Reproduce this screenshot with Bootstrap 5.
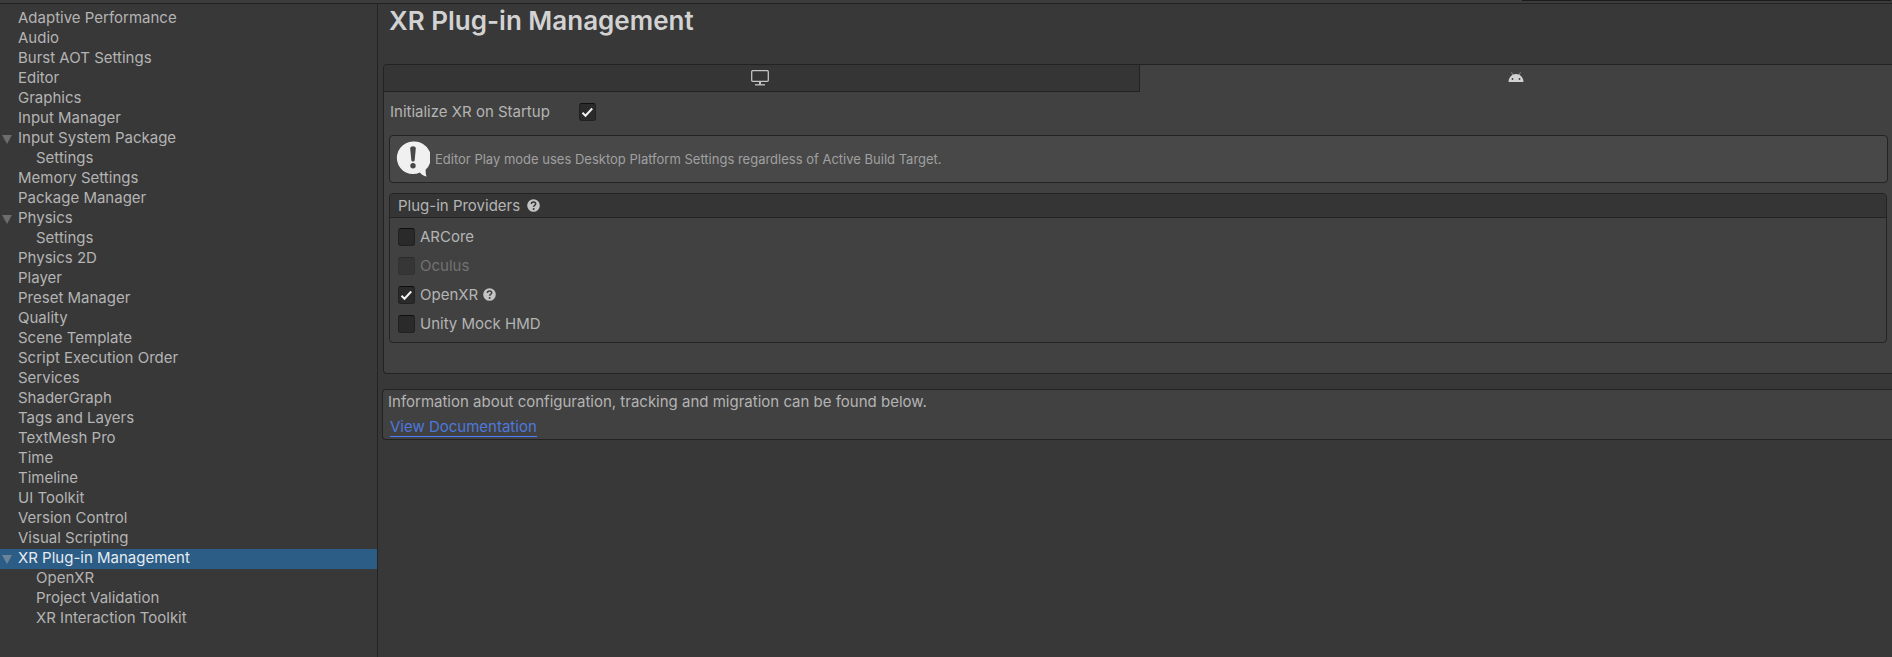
<!DOCTYPE html>
<html lang="en">
<head>
<meta charset="utf-8">
<meta name="viewport" content="width=device-width, initial-scale=1">
<title>Project Settings</title>
<link href="https://cdn.jsdelivr.net/npm/bootstrap@5.3.0/dist/css/bootstrap.min.css" rel="stylesheet">
<style>
  :root { --line: #232323; --panel: #414141; --base: #383838; --ink: #b4b4b4; }
  body { background: var(--base); color: var(--ink); font-family: Inter, "Liberation Sans", sans-serif; font-size: 15px; line-height: 20px; }
  .top-strip { height: 4px; background: #3c3c3c; border-bottom: 1px solid var(--line); }
  .search-edge { width: 369px; height: 1px; margin-right: 1px; background: #1c1c1c; }
  .sidebar { width: 378px; padding-top: 5px; border-right: 1px solid var(--line); }
  .tree-link { display: flex; align-items: center; height: 20px; padding: 0 0 2px 18px; color: var(--ink); text-decoration: none; white-space: nowrap; }
  .tree-link.child { padding-left: 36px; }
  .tree-link.parent { padding-left: 2px; }
  .tree-link.parent svg { width: 10px; height: 10px; margin: 2px 6px 0 0; fill: #6c6c6c; }
  .tree-link.selected { background: #2c5d87; color: #e6ecf1; }
  .tree-link.selected svg { fill: #6b8499; }
  .content-pane { padding-left: 5px; }
  .page-title { font-size: 26px; line-height: 32px; font-weight: 600; color: #d2d2d2; padding-left: 6px; margin: 1px 0 27px; }
  .frame { border: 1px solid var(--line); border-right: 0; border-radius: 4px 0 0 4px; background: var(--panel); }
  .platform-tab { height: 27px; padding: 0 0 4px; border: 0; background: transparent; color: #c4c4c4; }
  .platform-tab.idle { padding: 0 2px 0 0; background: #353535; border-right: 1px solid var(--line); border-bottom: 1px solid var(--line); border-radius: 3px 0 0 0; }
  .platform-tab svg { display: block; margin: 0 auto; }
  .tick { appearance: none; width: 17px; height: 18px; margin: 0; flex: none; background: #2a2a2a center/17px 18px no-repeat; border: 1px solid #212121; border-top-color: #0f0f0f; border-radius: 3px; }
  .tick:checked { background-image: url("data:image/svg+xml,%3Csvg xmlns='http://www.w3.org/2000/svg' viewBox='0 0 17 18'%3E%3Cpath d='M3.5 9.8 6.5 12.7 13.2 5.5' fill='none' stroke='%23f2f2f2' stroke-width='2'/%3E%3C/svg%3E"); }
  .tick:disabled { background-color: #363636; border-color: #323232; border-top-color: #2b2b2b; }
  .startup-row { height: 40px; padding: 0 0 1px 6px; }
  .startup-row label { width: 189px; }
  .notice { height: 48px; margin: 3px 4px 10px 5px; padding-left: 6px; border: 1px solid var(--line); border-radius: 4px; background: #484848; color: #a0a0a0; font-size: 13px; }
  .notice svg { margin-right: 5px; }
  .providers { margin: 0 5px 30px 5px; border: 1px solid var(--line); border-radius: 4px; }
  .providers-head { height: 24px; padding: 0 0 0 8px; gap: 7px; background: #353535; border-bottom: 1px solid var(--line); border-radius: 3px 3px 0 0; }
  .provider-list { padding: 4px 8px; }
  .provider-row { height: 29px; gap: 5px; }
  .provider-row.off { color: #727272; }
  .doc-frame { margin: 15px 0 0 -1px; height: 51px; padding: 2px 5px; }
  .doc-link { color: #4d78df; text-decoration: none; border-bottom: 1px solid #4c7eff; line-height: 19px; margin: 5px 0 0 2px; }
</style>
</head>
<body>
<div class="d-flex flex-column min-vh-100">
  <header class="top-strip d-flex justify-content-end"><div class="search-edge"></div></header>
  <div class="d-flex flex-grow-1">
    <nav class="sidebar flex-shrink-0" aria-label="Settings">
      <a class="tree-link" href="#">Adaptive Performance</a>
      <a class="tree-link" href="#">Audio</a>
      <a class="tree-link" href="#">Burst AOT Settings</a>
      <a class="tree-link" href="#">Editor</a>
      <a class="tree-link" href="#">Graphics</a>
      <a class="tree-link" href="#">Input Manager</a>
      <a class="tree-link parent" href="#"><svg viewBox="0 0 10 10"><path d="M0 1h10L5 10z"/></svg>Input System Package</a>
      <a class="tree-link child" href="#">Settings</a>
      <a class="tree-link" href="#">Memory Settings</a>
      <a class="tree-link" href="#">Package Manager</a>
      <a class="tree-link parent" href="#"><svg viewBox="0 0 10 10"><path d="M0 1h10L5 10z"/></svg>Physics</a>
      <a class="tree-link child" href="#">Settings</a>
      <a class="tree-link" href="#">Physics 2D</a>
      <a class="tree-link" href="#">Player</a>
      <a class="tree-link" href="#">Preset Manager</a>
      <a class="tree-link" href="#">Quality</a>
      <a class="tree-link" href="#">Scene Template</a>
      <a class="tree-link" href="#">Script Execution Order</a>
      <a class="tree-link" href="#">Services</a>
      <a class="tree-link" href="#">ShaderGraph</a>
      <a class="tree-link" href="#">Tags and Layers</a>
      <a class="tree-link" href="#">TextMesh Pro</a>
      <a class="tree-link" href="#">Time</a>
      <a class="tree-link" href="#">Timeline</a>
      <a class="tree-link" href="#">UI Toolkit</a>
      <a class="tree-link" href="#">Version Control</a>
      <a class="tree-link" href="#">Visual Scripting</a>
      <a class="tree-link parent selected" href="#" aria-current="page"><svg viewBox="0 0 10 10"><path d="M0 1h10L5 10z"/></svg>XR Plug-in Management</a>
      <a class="tree-link child" href="#">OpenXR</a>
      <a class="tree-link child" href="#">Project Validation</a>
      <a class="tree-link child" href="#">XR Interaction Toolkit</a>
    </nav>
    <main class="content-pane flex-grow-1">
      <h1 class="page-title">XR Plug-in Management</h1>
      <section class="frame">
        <div class="row g-0">
          <button type="button" class="platform-tab idle col" aria-label="Desktop">
            <svg width="18" height="16" viewBox="0 0 18 16" fill="none" stroke="currentColor"><rect x=".7" y=".7" width="16.6" height="10.6" rx="1" stroke-width="1.3"/><path d="M9 11.5v3" stroke-width="2"/><path d="M4 14.8h10" stroke-width="1.3"/></svg>
          </button>
          <button type="button" class="platform-tab col" aria-label="Android">
            <svg width="16" height="10" viewBox="0 0 16 10"><path d="M3.5.3 5 3M12.5.3 11 3" stroke="#8a8a8a" fill="none"/><path d="M.5 10C.6 5.500 4 2 8 2s7.400 3.500 7.500 8z" fill="#d2d2d2"/><circle cx="4.500" cy="7" r=".9" fill="#414141"/><circle cx="11.500" cy="7" r=".9" fill="#414141"/></svg>
          </button>
        </div>
        <div class="startup-row d-flex align-items-center">
          <label for="startup">Initialize XR on Startup</label>
          <input class="tick" type="checkbox" id="startup" checked>
        </div>
        <div class="notice d-flex align-items-center">
          <svg class="flex-shrink-0" width="34" height="36" viewBox="0 0 34 36"><path d="M17 .5a16.300 16.300 0 1 0 7 31.100c1.500 2 3.500 3.400 6.500 4-.7-2-1-4.500-.8-7A16.300 16.300 0 0 0 17 .5z" fill="#f0f0f0"/><path d="M14.200 7.500c0-3 5.600-3 5.600 0L18.700 19c-.2 2-3.200 2-3.400 0z" fill="#484848"/><circle cx="17" cy="24.800" r="2.700" fill="#484848"/></svg>
          <span>Editor Play mode uses Desktop Platform Settings regardless of Active Build Target.</span>
        </div>
        <fieldset class="providers">
          <div class="providers-head d-flex align-items-center">
            <span>Plug-in Providers</span>
            <svg width="13" height="13" viewBox="0 0 13 13"><circle cx="6.500" cy="6.500" r="6.300" fill="#c4c4c4"/><path d="M4.400 5c0-2.800 4.300-2.600 4.300-.2 0 1.500-2.100 1.500-2.100 3" fill="none" stroke="#353535" stroke-width="1.500"/><circle cx="6.600" cy="9.900" r="1" fill="#353535"/></svg>
          </div>
          <div class="provider-list">
            <div class="provider-row d-flex align-items-center"><input class="tick" type="checkbox" id="arcore"><label for="arcore">ARCore</label></div>
            <div class="provider-row off d-flex align-items-center"><input class="tick" type="checkbox" id="oculus" disabled><label for="oculus">Oculus</label></div>
            <div class="provider-row d-flex align-items-center"><input class="tick" type="checkbox" id="openxr" checked><label for="openxr">OpenXR</label>
              <svg width="13" height="13" viewBox="0 0 13 13"><circle cx="6.500" cy="6.500" r="6.300" fill="#c4c4c4"/><path d="M4.400 5c0-2.800 4.300-2.600 4.300-.2 0 1.500-2.100 1.500-2.100 3" fill="none" stroke="#414141" stroke-width="1.500"/><circle cx="6.600" cy="9.900" r="1" fill="#414141"/></svg>
            </div>
            <div class="provider-row d-flex align-items-center"><input class="tick" type="checkbox" id="mockhmd"><label for="mockhmd">Unity Mock HMD</label></div>
          </div>
        </fieldset>
      </section>
      <section class="frame doc-frame d-flex flex-column align-items-start">
        <div>Information about configuration, tracking and migration can be found below.</div>
        <a class="doc-link" href="#">View Documentation</a>
      </section>
    </main>
  </div>
</div>
<script src="https://cdn.jsdelivr.net/npm/bootstrap@5.3.0/dist/js/bootstrap.bundle.min.js"></script>
</body>
</html>
